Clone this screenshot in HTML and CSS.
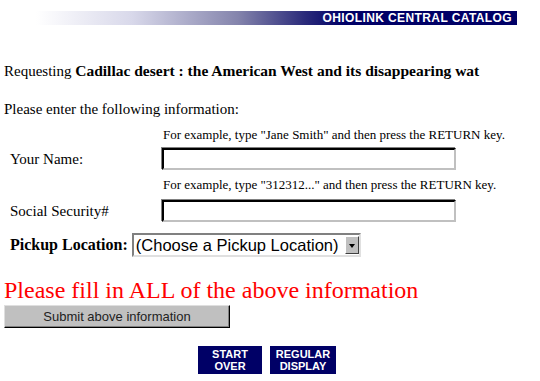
FILE: index.html
```html
<!DOCTYPE html>
<html lang="en">
<head>
<meta charset="UTF-8">
<title>OhioLINK Central Catalog - Request</title>
<link rel="stylesheet" href="styles.css">
</head>
<body>

<div class="banner"><span>OHIOLINK CENTRAL CATALOG</span></div>

<p class="request">Requesting <b>Cadillac desert : the American West and its disappearing wat</b></p>

<form class="patron-form">
    <p class="intro">Please enter the following information:</p>
    <div class="fields">
        <span></span>
        <span class="hint">For example, type "Jane Smith" and then press the RETURN key.</span>
        <label for="name">Your Name:</label>
        <input type="text" id="name" name="name" class="text-box">

        <span></span>
        <span class="hint next">For example, type "312312..." and then press the RETURN key.</span>
        <label for="ssn">Social Security#</label>
        <input type="text" id="ssn" name="ssn" class="text-box">
    </div>

    <div class="pickup">
        <label for="loc">Pickup Location:</label>
        <div class="select-box">
            <select id="loc" name="loc">
                <option>(Choose a Pickup Location)</option>
            </select>
            <span class="arrow"></span>
        </div>
    </div>

    <p class="warning">Please fill in ALL of the above information</p>
    <button type="submit" class="submit-btn">Submit above information</button>
</form>

<div class="nav">
    <a href="#" class="nav-btn" style="width:64px">START<br>OVER</a>
    <a href="#" class="nav-btn" style="width:66px">REGULAR<br>DISPLAY</a>
</div>

</body>
</html>
```

FILE: styles.css
```css
body {
    font-family: "Liberation Serif", "Times New Roman", serif;
    font-size: 15px;
    margin: 4px;
    color: #000;
    background: #fff;
}
.banner {
    margin: 7px 0 0 32px;
    width: 481px;
    height: 14px;
    background: linear-gradient(to right, #fff 0%, #d8d8ea 20%, #8484ac 42%, #2a2a7a 56%, #000066 64%, #000066 100%);
    text-align: right;
    font-family: "Liberation Sans", Arial, sans-serif;
    font-weight: bold;
    font-size: 12px;
    line-height: 14px;
    letter-spacing: 0.4px;
    color: #fff;
}
.banner span {
    padding-right: 5px;
}
.request {
    margin: 37px 0 0 0;
    line-height: 18px;
}
.request b {
    font-size: 15.5px;
}
.intro {
    margin: 20px 0 0 0;
    line-height: 18px;
}
.fields {
    display: grid;
    grid-template-columns: 158px 294px;
    align-items: center;
    margin-top: 5px;
}
.fields label {
    padding-left: 6px;
}
.hint {
    font-size: 13px;
    line-height: 15px;
    white-space: nowrap;
    padding: 4px 0 6px 1px;
}
.hint.next {
    padding: 7px 0 8px 1px;
}
.text-box {
    width: 294px;
    height: 22px;
    box-sizing: border-box;
    border: 2px solid;
    border-color: #000 #c0c0c0 #c0c0c0 #000;
    box-shadow: -1px -1px 0 #808080;
    padding: 0 3px;
    margin: 0;
    outline: none;
}
.pickup {
    display: flex;
    align-items: center;
    gap: 4px;
    margin-top: 11px;
    padding-left: 6px;
}
.pickup label {
    font-weight: bold;
    font-size: 16px;
}
.select-box {
    position: relative;
    width: 229px;
    height: 24px;
}
.select-box select {
    appearance: none;
    -webkit-appearance: none;
    width: 100%;
    height: 100%;
    box-sizing: border-box;
    border: 2px solid;
    border-color: #808080 #e0e0e0 #e0e0e0 #808080;
    background: #fff;
    font-family: "Liberation Sans", Arial, sans-serif;
    font-size: 16.5px;
    padding: 0 0 0 2px;
    margin: 0;
    color: #000;
}
.arrow {
    position: absolute;
    top: 3px;
    right: 2px;
    width: 14px;
    height: 18px;
    box-sizing: border-box;
    background: #c0c0c0;
    border: 1px solid;
    border-color: #fff #404040 #404040 #fff;
}
.arrow::after {
    content: "";
    position: absolute;
    left: 3px;
    top: 7px;
    border-left: 3.5px solid transparent;
    border-right: 3.5px solid transparent;
    border-top: 4px solid #000;
}
.warning {
    color: #f00;
    font-size: 24px;
    line-height: 27px;
    margin: 20px 0 0 0;
}
.submit-btn {
    display: block;
    width: 226px;
    height: 23px;
    margin: 1px 0 0 0;
    padding: 0;
    background: #c0c0c0;
    border: 1px solid;
    border-color: #dfdfdf #000 #000 #dfdfdf;
    box-shadow: inset -1px -1px 0 #808080;
    font-family: "Liberation Sans", Arial, sans-serif;
    font-size: 13px;
    color: #222;
}
.nav {
    display: flex;
    justify-content: center;
    gap: 8px;
    margin-top: 18px;
    padding-right: 6px;
}
.nav-btn {
    display: block;
    height: 28px;
    background: #000066;
    color: #fff;
    text-decoration: none;
    text-align: center;
    font-family: "Liberation Sans", Arial, sans-serif;
    font-weight: bold;
    font-size: 11px;
    line-height: 12px;
    padding-top: 2px;
    box-sizing: border-box;
}
```
